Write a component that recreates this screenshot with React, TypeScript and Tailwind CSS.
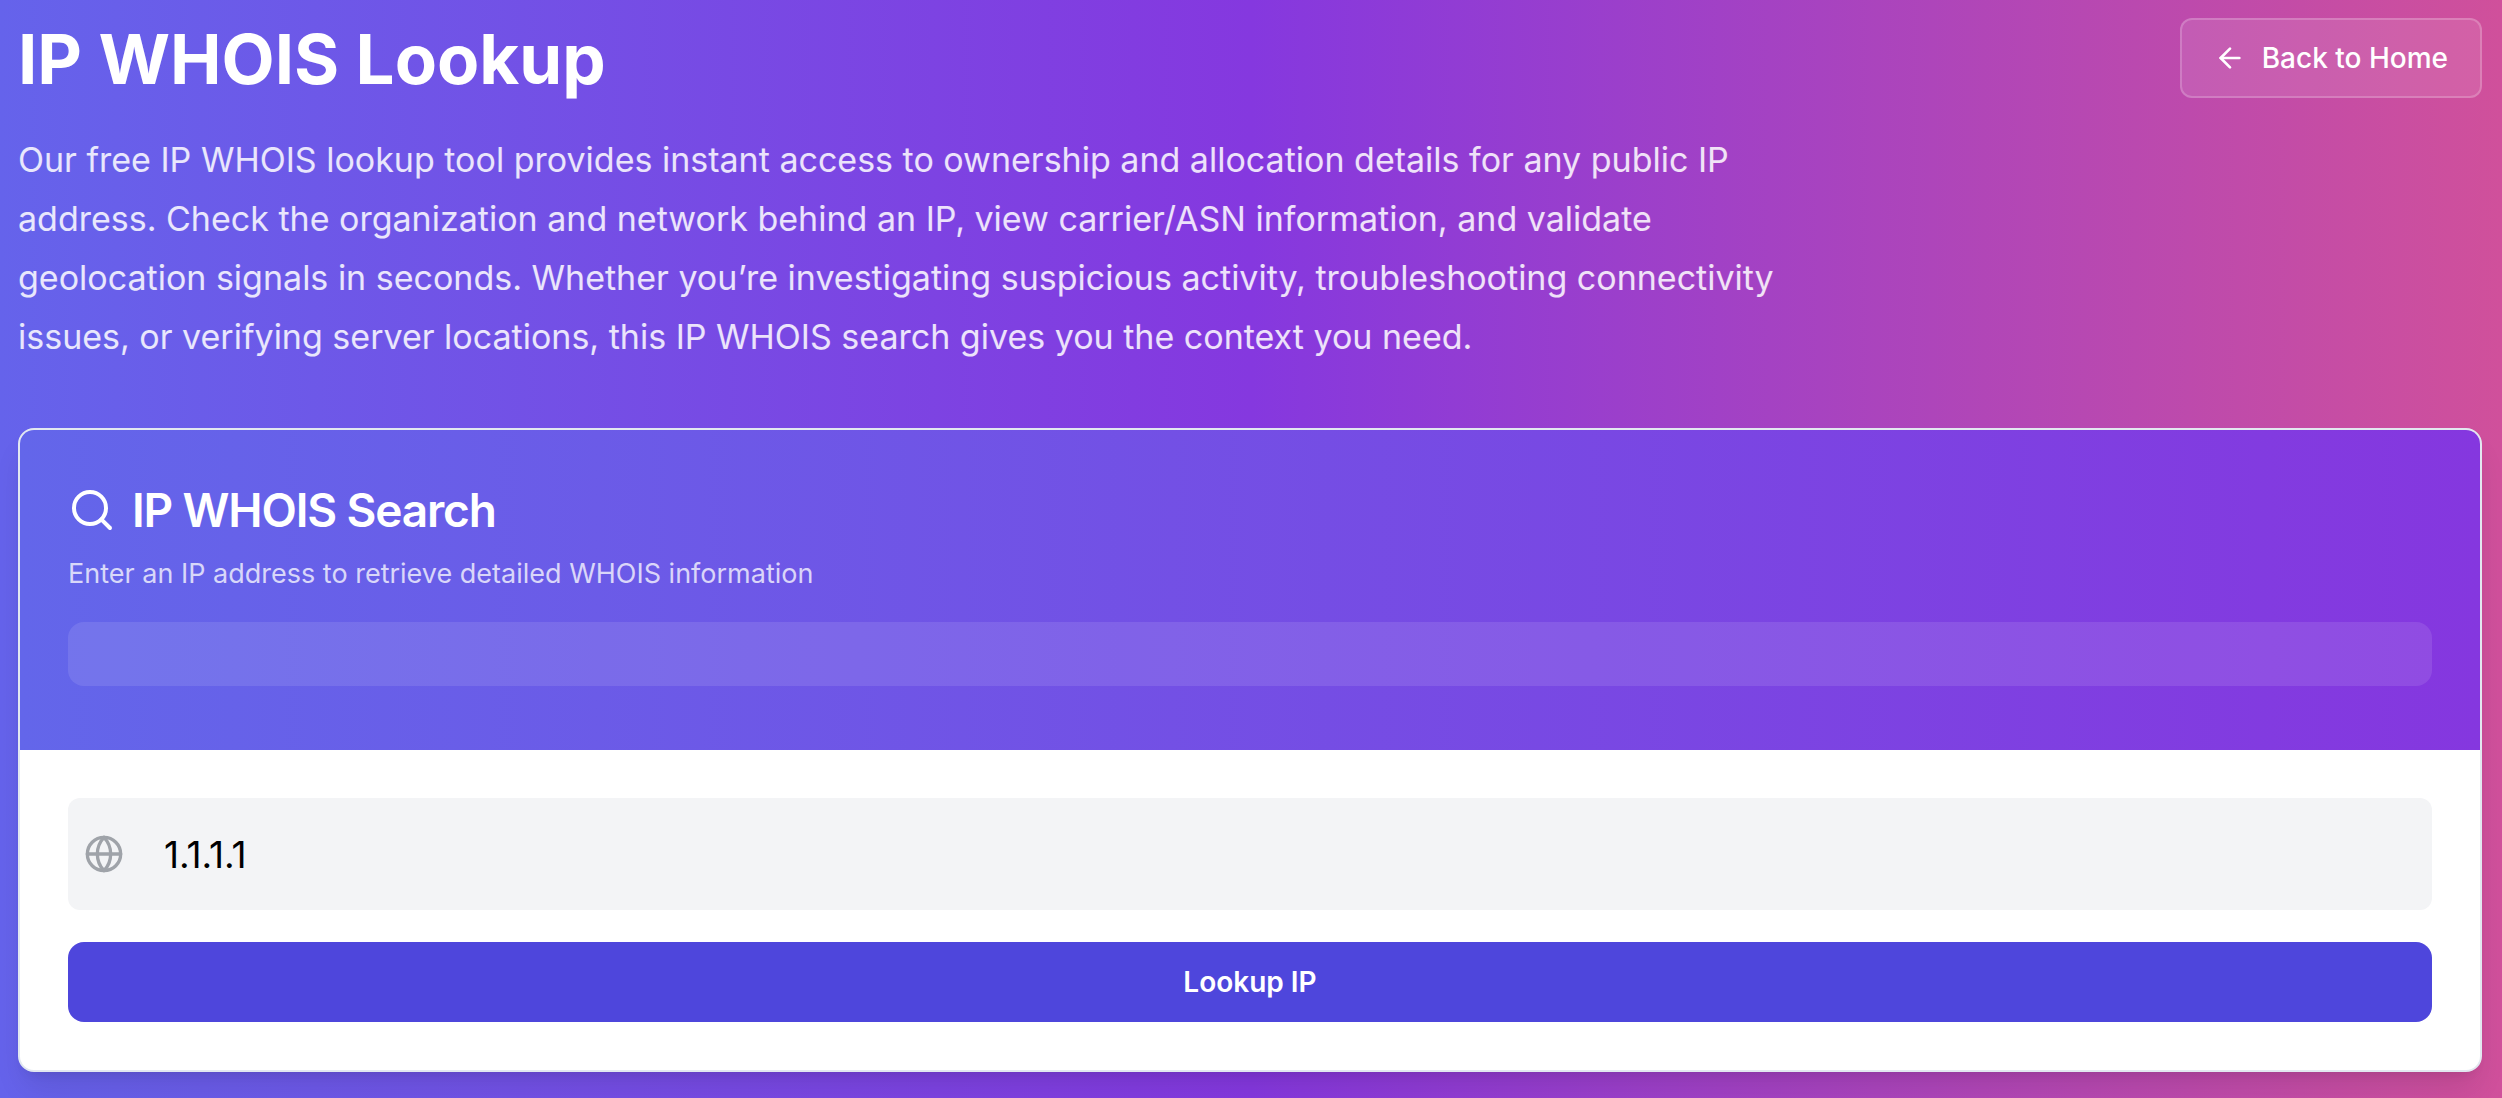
import React, { useState } from "react";
import { ArrowLeft, Globe, Search } from "lucide-react";

export default function App() {
  const [ip, setIp] = useState("1.1.1.1");

  return (
    <div className="min-h-screen bg-[linear-gradient(90deg,#6563eb_0%,#8538df_50%,#d0509b_100%)] pt-[18px] pr-5 pb-6 pl-[18px] font-['Inter',sans-serif]">
      <header className="flex items-start justify-between">
        <div className="max-w-[1792px]">
          <h1 className="text-[69px] leading-[82px] font-bold text-white">IP WHOIS Lookup</h1>
          <p className="mt-[30px] text-[34px] leading-[59px] text-white/85">
            Our free IP WHOIS lookup tool provides instant access to ownership and allocation details for any public IP
            address. Check the organization and network behind an IP, view carrier/ASN information, and validate
            geolocation signals in seconds. Whether you’re investigating suspicious activity, troubleshooting
            connectivity issues, or verifying server locations, this IP WHOIS search gives you the context you need.
          </p>
        </div>
        <a
          href="/"
          className="flex h-20 shrink-0 items-center gap-4 rounded-xl border-2 border-white/20 bg-white/10 px-8 text-[28px] font-medium text-white"
        >
          <ArrowLeft className="size-8" />
          Back to Home
        </a>
      </header>

      <main className="mt-[62px] overflow-hidden rounded-2xl border-2 border-slate-200 bg-white shadow-[0_20px_30px_-6px_rgba(0,0,0,0.1),0_8px_12px_-8px_rgba(0,0,0,0.1)]">
        <section className="bg-[linear-gradient(90deg,#6366ea,#8537df)] px-12 pt-14 pb-16">
          <h2 className="flex items-center gap-4 text-[46px] leading-[48px] font-semibold tracking-tight text-white">
            <Search className="size-12" />
            IP WHOIS Search
          </h2>
          <p className="mt-5 text-[27px] leading-10 text-white/75">
            Enter an IP address to retrieve detailed WHOIS information
          </p>
          <div className="mt-7 h-16 rounded-2xl bg-white/10" />
        </section>

        <form className="space-y-8 p-12" onSubmit={(e) => e.preventDefault()}>
          <div className="relative">
            <Globe className="absolute top-1/2 left-4 size-10 -translate-y-1/2 text-[#9fa3a9]" />
            <input
              type="text"
              aria-label="IP address"
              value={ip}
              onChange={(e) => setIp(e.target.value)}
              className="h-28 w-full rounded-xl bg-gray-100 pr-6 pl-24 text-[37px] text-black outline-none"
            />
          </div>
          <button
            type="submit"
            className="h-20 w-full rounded-2xl bg-[#4e46dc] text-[28px] font-semibold text-white"
          >
            Lookup IP
          </button>
        </form>
      </main>
    </div>
  );
}
